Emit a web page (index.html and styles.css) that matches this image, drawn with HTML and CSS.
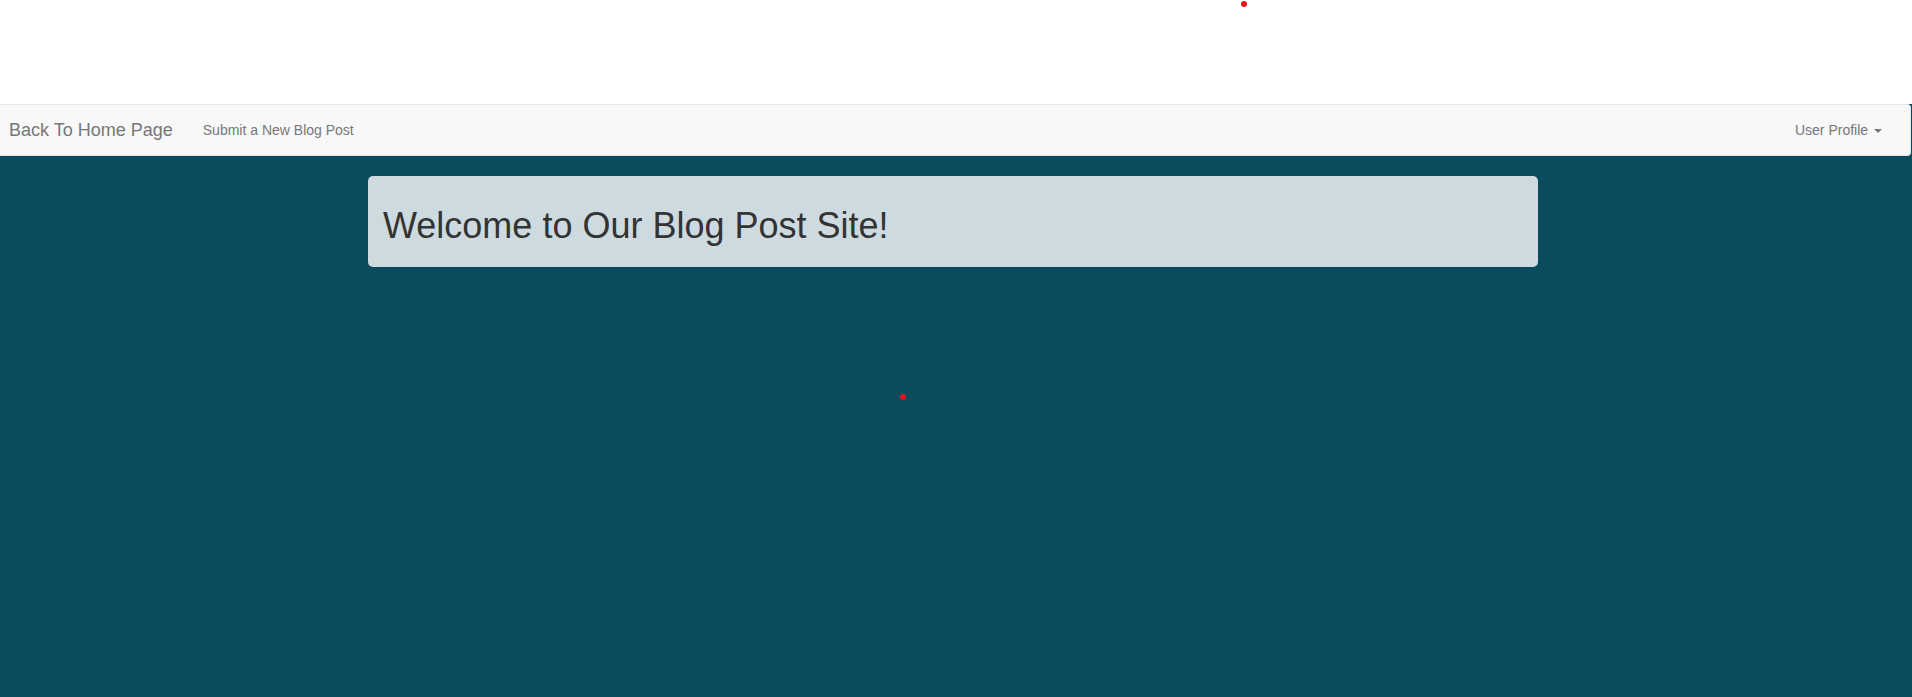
FILE: index.html
```html
<!DOCTYPE html>
<html>
<head>
<meta charset="utf-8">
<link rel="stylesheet" href="styles.css">
</head>
<body>
<div class="top"></div>
<nav class="navbar">
  <a class="brand" href="#">Back To Home Page</a>
  <a class="nav-link" href="#">Submit a New Blog Post</a>
  <a class="nav-link profile" href="#">User Profile <span class="caret"></span></a>
</nav>
<main class="main">
  <div class="jumbo">
    <h1>Welcome to Our Blog Post Site!</h1>
  </div>
</main>
<span class="dot dot-top"></span>
<span class="dot dot-mid"></span>
</body>
</html>
```

FILE: styles.css
```css
html, body {
  margin: 0;
  padding: 0;
  height: 100%;
}
body {
  font-family: "Liberation Sans", Arial, sans-serif;
  font-size: 14px;
  color: #333;
  background: #0b4b5e;
  display: flex;
  flex-direction: column;
  position: relative;
  overflow: hidden;
}
.top {
  height: 104px;
  background: #fff;
  flex: none;
}
.navbar {
  flex: none;
  height: 50px;
  margin-right: 1px;
  background: #f8f8f8;
  border: 1px solid #e7e7e7;
  border-left: none;
  border-radius: 0 4px 4px 0;
  display: flex;
  align-items: stretch;
}
.navbar a {
  text-decoration: none;
  color: #777;
  line-height: 20px;
  padding: 15px;
}
.brand {
  font-size: 18px;
  padding-left: 9px !important;
}
.nav-link {
  font-size: 14px;
}
.profile {
  margin-left: auto;
  padding-right: 28px !important;
}
.caret {
  display: inline-block;
  width: 0;
  height: 0;
  margin-left: 2px;
  vertical-align: middle;
  border-top: 4px solid #777;
  border-left: 4px solid transparent;
  border-right: 4px solid transparent;
}
.main {
  flex: 1;
  padding-top: 20px;
}
.jumbo {
  margin-left: 368px;
  width: 1170px;
  box-sizing: border-box;
  height: 91px;
  background: #cddbe0;
  border-radius: 5px;
  padding: 30px 15px 0;
}
.jumbo h1 {
  margin: 0;
  font-size: 36px;
  line-height: 40px;
  font-weight: 500;
  color: #333;
}
.dot {
  position: absolute;
  width: 6px;
  height: 6px;
  border-radius: 50%;
  background: #e8141c;
}
.dot-top {
  left: 1241px;
  top: 1px;
}
.dot-mid {
  left: 900px;
  top: 394px;
}
```
